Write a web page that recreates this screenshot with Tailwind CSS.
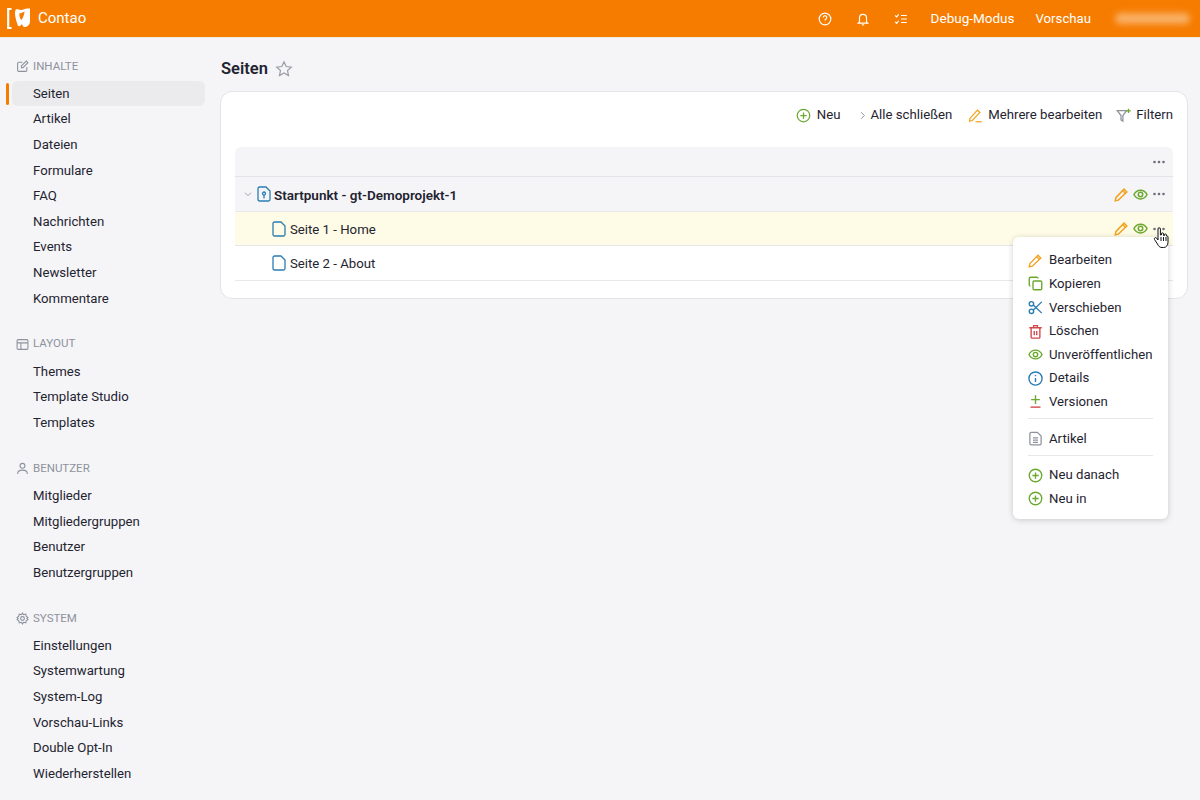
<!DOCTYPE html>
<html lang="de">
  <head>
    <meta charset="UTF-8" />
    <title>Seiten - Contao</title>
    <script src="https://cdn.jsdelivr.net/npm/@tailwindcss/browser@4"></script>
  </head>
  <body class="relative h-[800px] w-[1200px] overflow-hidden bg-[#f5f5f8] font-['Roboto',sans-serif] text-[13.2px] text-[#1f2430]">
    <!-- header -->
    <header class="flex h-[38px] items-center border-b border-[#f0ece6] bg-[#f67c00] text-white">
      <div class="flex items-center pl-[7px]">
        <svg class="h-[24px] w-[25px]" viewBox="0 0 25 24" fill="none">
          <path d="M4.500 2 H1.200 V21 H4.500" stroke="#fff" stroke-width="2.200" />
          <path d="M9 2.500 C11 1.500 13 3 14.500 3 C16 3 18 1.500 20 1.500 L23 1.500 V14 C23 18 20 20 17.500 20 C16 20 15.500 18.500 15 17 C14 18.500 12.500 19.500 11 19 C9.500 15 8 10 8 6 C8 4.500 8.300 3 9 2.500 Z" fill="#fff" />
          <path d="M12.500 6 C12 9 13 12 14.500 13 C16 11 17.500 7 17.500 4.500 C16 5.500 14 6.500 12.500 6 Z" fill="#f67c00" />
        </svg>
        <span class="ml-[6px] text-[15px]">Contao</span>
      </div>
      <div class="ml-auto flex items-center">
        <svg class="h-[14px] w-[14px]" viewBox="0 0 24 24" fill="none" stroke="#fff" stroke-width="2"><circle cx="12" cy="12" r="10" /><path d="M9 9.500a3 3 0 1 1 4.500 2.600c-1 .6-1.500 1.200-1.500 2.400" /><path d="M12 17.500v.5" /></svg>
        <svg class="ml-[24px] h-[14px] w-[14px]" viewBox="0 0 24 24" fill="none" stroke="#fff" stroke-width="2"><path d="M6 17V10a6 6 0 0 1 12 0v7l2 2H4z" /><path d="M10 22h4" /></svg>
        <svg class="ml-[24px] h-[14px] w-[14px]" viewBox="0 0 24 24" fill="none" stroke="#fff" stroke-width="2"><path d="M2 6l2.500 2.500L8 4M2 17l2.500 2.500L8 15M12 6h10M12 12h10M12 18h10" /></svg>
        <span class="ml-[23px] text-[13.5px]">Debug-Modus</span>
        <span class="ml-[21px]">Vorschau</span>
        <div class="mr-[10px] ml-[24px] h-[11px] w-[75px] rounded-full bg-white/40 blur-[3px]"></div>
      </div>
    </header>

    <div class="flex">
      <!-- sidebar -->
      <nav class="w-[220px] shrink-0 pt-[15px]">
        <div class="mb-[20px]">
          <h3 class="flex h-[27.5px] items-center pb-[1px] pl-[16px] text-[11.5px] text-[#8d929c] uppercase">
            <svg class="mr-[4px] h-[13px] w-[13px]" viewBox="0 0 24 24" fill="none" stroke="#8d929c" stroke-width="2"><path d="M20 13v6a2 2 0 0 1-2 2H5a2 2 0 0 1-2-2V6a2 2 0 0 1 2-2h7" /><path d="M10 11l9-9 3 3-9 9H10z" /></svg>
            Inhalte
          </h3>
          <div class="relative">
            <span class="absolute top-[2px] left-[6px] h-[22px] w-[3px] rounded-full bg-[#f67c00]"></span>
            <a class="ml-[12px] flex h-[25.6px] w-[193px] items-center rounded-[6px] bg-[#ebebee] pt-[1px] pl-[21px]">Seiten</a>
          </div>
          <a class="flex h-[25.6px] items-center pt-[1px] pl-[33px]">Artikel</a>
          <a class="flex h-[25.6px] items-center pt-[1px] pl-[33px]">Dateien</a>
          <a class="flex h-[25.6px] items-center pt-[1px] pl-[33px]">Formulare</a>
          <a class="flex h-[25.6px] items-center pt-[1px] pl-[33px]">FAQ</a>
          <a class="flex h-[25.6px] items-center pt-[1px] pl-[33px]">Nachrichten</a>
          <a class="flex h-[25.6px] items-center pt-[1px] pl-[33px]">Events</a>
          <a class="flex h-[25.6px] items-center pt-[1px] pl-[33px]">Newsletter</a>
          <a class="flex h-[25.6px] items-center pt-[1px] pl-[33px]">Kommentare</a>
        </div>
        <div class="mb-[20px]">
          <h3 class="flex h-[27.5px] items-center pb-[1px] pl-[16px] text-[11.5px] text-[#8d929c] uppercase">
            <svg class="mr-[4px] h-[13px] w-[13px]" viewBox="0 0 24 24" fill="none" stroke="#8d929c" stroke-width="2"><rect x="2" y="3" width="20" height="18" rx="2" /><path d="M2 9h20M9 9v12" /></svg>
            Layout
          </h3>
          <a class="flex h-[25.6px] items-center pt-[1px] pl-[33px]">Themes</a>
          <a class="flex h-[25.6px] items-center pt-[1px] pl-[33px]">Template Studio</a>
          <a class="flex h-[25.6px] items-center pt-[1px] pl-[33px]">Templates</a>
        </div>
        <div class="mb-[20px]">
          <h3 class="flex h-[27.5px] items-center pb-[1px] pl-[16px] text-[11.5px] text-[#8d929c] uppercase">
            <svg class="mr-[4px] h-[13px] w-[13px]" viewBox="0 0 24 24" fill="none" stroke="#8d929c" stroke-width="2"><circle cx="12" cy="7" r="4.500" /><path d="M3 22c0-5 4-7 9-7s9 2 9 7" /></svg>
            Benutzer
          </h3>
          <a class="flex h-[25.6px] items-center pt-[1px] pl-[33px]">Mitglieder</a>
          <a class="flex h-[25.6px] items-center pt-[1px] pl-[33px]">Mitgliedergruppen</a>
          <a class="flex h-[25.6px] items-center pt-[1px] pl-[33px]">Benutzer</a>
          <a class="flex h-[25.6px] items-center pt-[1px] pl-[33px]">Benutzergruppen</a>
        </div>
        <div>
          <h3 class="flex h-[27.5px] items-center pb-[1px] pl-[16px] text-[11.5px] text-[#8d929c] uppercase">
            <svg class="mr-[4px] h-[13px] w-[13px]" viewBox="0 0 24 24" fill="none" stroke="#8d929c" stroke-width="2"><circle cx="12" cy="12" r="3.500" /><path d="M12 2l2 3 4-1 1 4 3 2-2 2 2 2-3 2-1 4-4-1-2 3-2-3-4 1-1-4-3-2 2-2-2-2 3-2 1-4 4 1z" /></svg>
            System
          </h3>
          <a class="flex h-[25.6px] items-center pt-[1px] pl-[33px]">Einstellungen</a>
          <a class="flex h-[25.6px] items-center pt-[1px] pl-[33px]">Systemwartung</a>
          <a class="flex h-[25.6px] items-center pt-[1px] pl-[33px]">System-Log</a>
          <a class="flex h-[25.6px] items-center pt-[1px] pl-[33px]">Vorschau-Links</a>
          <a class="flex h-[25.6px] items-center pt-[1px] pl-[33px]">Double Opt-In</a>
          <a class="flex h-[25.6px] items-center pt-[1px] pl-[33px]">Wiederherstellen</a>
        </div>
      </nav>

      <!-- main -->
      <main class="w-[968px] pt-[18px]">
        <div class="flex h-[26px] items-center pl-[1px]">
          <h1 class="text-[16.5px] font-semibold">Seiten</h1>
          <svg class="ml-[7px] h-[18px] w-[18px]" viewBox="0 0 24 24" fill="none" stroke="#9a9ea6" stroke-width="1.600"><path d="M12 2.500l2.900 6.200 6.800.8-5 4.600 1.300 6.700-6-3.400-6 3.400 1.300-6.700-5-4.600 6.800-.8z" /></svg>
        </div>
        <div class="mt-[9px] h-[208px] rounded-[12px] border border-[#e4e4e8] bg-white px-[14px]">
          <div class="flex h-[46px] items-center justify-end">
            <svg class="h-[15px] w-[15px]" viewBox="0 0 24 24" fill="none" stroke="#6aa82e" stroke-width="2"><circle cx="12" cy="12" r="10" /><path d="M12 7v10M7 12h10" /></svg>
            <span class="ml-[6px]">Neu</span>
            <svg class="ml-[18px] h-[9px] w-[9px]" viewBox="0 0 24 24" fill="none" stroke="#8d929c" stroke-width="2.500"><path d="M8 3l9 9-9 9" /></svg>
            <span class="ml-[3px]">Alle schließen</span>
            <svg class="ml-[16px] h-[15px] w-[15px]" viewBox="0 0 24 24" fill="none" stroke="#f2a31f" stroke-width="2"><path d="M3 17L15 3.500l4 3.500L7 20l-4.500 1z" /><path d="M12 22h10" /></svg>
            <span class="ml-[5px]">Mehrere bearbeiten</span>
            <svg class="ml-[14px] h-[15px] w-[15px]" viewBox="0 0 24 24" fill="none" stroke="#8d929c" stroke-width="2"><path d="M2 4h15l-6 8v9l-3-2v-7z" /><path d="M20 1v7M16.500 4.500h7" stroke="#6aa82e" /></svg>
            <span class="ml-[5px]">Filtern</span>
          </div>
          <div class="mt-[9px]">
            <div class="flex h-[30px] items-center justify-end rounded-t-[6px] border-b border-[#e4e4e8] bg-[#f5f5f8] pr-[7px]">
              <svg class="h-[14px] w-[14px]" viewBox="0 0 14 14" fill="#6b7078"><circle cx="2.500" cy="7" r="1.300" /><circle cx="7" cy="7" r="1.300" /><circle cx="11.500" cy="7" r="1.300" /></svg>
            </div>
            <div class="flex h-[35px] items-center border-b border-[#e8e8ec] bg-[#f5f5f8] pr-[7px]">
              <svg class="ml-[9px] h-[8px] w-[8px]" viewBox="0 0 24 24" fill="none" stroke="#8d929c" stroke-width="2.500"><path d="M3 8l9 9 9-9" /></svg>
              <svg class="ml-[5px] h-[16px] w-[15px]" viewBox="0 0 15 16" fill="none" stroke="#2b7cb3" stroke-width="1.300"><path d="M2.500 1h6.500l4 4v8.500a1.500 1.500 0 0 1-1.500 1.500h-9A1.500 1.500 0 0 1 1 13.500v-11A1.500 1.500 0 0 1 2.500 1z" /><circle cx="7" cy="7.500" r="1.500" /><path d="M7 9v3.500" /></svg>
              <span class="ml-[2px] pt-[2px] text-[13.5px] font-semibold">Startpunkt - gt-Demoprojekt-1</span>
              <div class="ml-auto flex items-center gap-[4px]">
                <svg class="h-[15px] w-[15px]" viewBox="0 0 24 24" fill="none" stroke="#f2a31f" stroke-width="2.400"><path d="M3 17L16 3.500l4.500 4.500L7 21l-5 1z" /><path d="M14 6l4.500 4.500" /></svg>
                <svg class="h-[15px] w-[15px]" viewBox="0 0 24 24" fill="none" stroke="#6aa82e" stroke-width="2.400"><path d="M1.500 12C4 7 8 5 12 5s8 2 10.500 7C20 17 16 19 12 19s-8-2-10.500-7z" /><circle cx="12" cy="12" r="3.500" /></svg>
                <svg class="h-[14px] w-[14px]" viewBox="0 0 14 14" fill="#6b7078"><circle cx="2.500" cy="7" r="1.300" /><circle cx="7" cy="7" r="1.300" /><circle cx="11.500" cy="7" r="1.300" /></svg>
              </div>
            </div>
            <div class="flex h-[34px] items-center border-b border-[#e8e8ec] bg-[#fefbe6] pr-[7px]">
              <svg class="ml-[37px] h-[16px] w-[15px]" viewBox="0 0 15 16" fill="none" stroke="#2b7cb3" stroke-width="1.300"><path d="M2.500 1h6.500l4 4v8.500a1.500 1.500 0 0 1-1.500 1.500h-9A1.500 1.500 0 0 1 1 13.500v-11A1.500 1.500 0 0 1 2.500 1z" /></svg>
              <span class="ml-[3px] pt-[2px]">Seite 1 - Home</span>
              <div class="ml-auto flex items-center gap-[4px]">
                <svg class="h-[15px] w-[15px]" viewBox="0 0 24 24" fill="none" stroke="#f2a31f" stroke-width="2.400"><path d="M3 17L16 3.500l4.500 4.500L7 21l-5 1z" /><path d="M14 6l4.500 4.500" /></svg>
                <svg class="h-[15px] w-[15px]" viewBox="0 0 24 24" fill="none" stroke="#6aa82e" stroke-width="2.400"><path d="M1.500 12C4 7 8 5 12 5s8 2 10.500 7C20 17 16 19 12 19s-8-2-10.500-7z" /><circle cx="12" cy="12" r="3.500" /></svg>
                <svg class="h-[14px] w-[14px]" viewBox="0 0 14 14" fill="#6b7078"><circle cx="2.500" cy="7" r="1.300" /><circle cx="7" cy="7" r="1.300" /><circle cx="11.500" cy="7" r="1.300" /></svg>
              </div>
            </div>
            <div class="flex h-[35px] items-center border-b border-[#e8e8ec] pr-[7px]">
              <svg class="ml-[37px] h-[16px] w-[15px]" viewBox="0 0 15 16" fill="none" stroke="#2b7cb3" stroke-width="1.300"><path d="M2.500 1h6.500l4 4v8.500a1.500 1.500 0 0 1-1.500 1.500h-9A1.500 1.500 0 0 1 1 13.500v-11A1.500 1.500 0 0 1 2.500 1z" /></svg>
              <span class="ml-[3px] pt-[2px]">Seite 2 - About</span>
            </div>
          </div>
        </div>
      </main>
    </div>

    <!-- context menu -->
    <div class="absolute top-[237px] left-[1013px] h-[282px] w-[155px] rounded-[6px] bg-white px-[15px] pt-[11px] shadow-[0_1px_6px_rgba(0,0,0,0.18)]">
      <a class="flex h-[23.6px] items-center gap-[6px] pt-[1px]"><svg class="h-[15px] w-[15px] shrink-0" viewBox="0 0 24 24" fill="none" stroke="#f2a31f" stroke-width="2.200"><path d="M3 17L16 3.500l4.500 4.500L7 21l-5 1z" /><path d="M14 6l4.500 4.500" /></svg>Bearbeiten</a>
      <a class="flex h-[23.6px] items-center gap-[6px] pt-[1px]"><svg class="h-[15px] w-[15px] shrink-0" viewBox="0 0 24 24" fill="none" stroke="#6aa82e" stroke-width="2.200"><rect x="8" y="8" width="14" height="14" rx="2" /><path d="M4 16a2 2 0 0 1-2-2V4a2 2 0 0 1 2-2h10a2 2 0 0 1 2 2" /></svg>Kopieren</a>
      <a class="flex h-[23.6px] items-center gap-[6px] pt-[1px]"><svg class="h-[15px] w-[15px] shrink-0" viewBox="0 0 24 24" fill="none" stroke="#2b7cb3" stroke-width="2.200"><circle cx="5.500" cy="6" r="3.500" /><circle cx="5.500" cy="18" r="3.500" /><path d="M8.500 8L22 21M8.500 16L22 3" /></svg>Verschieben</a>
      <a class="flex h-[23.6px] items-center gap-[6px] pt-[1px]"><svg class="h-[15px] w-[15px] shrink-0" viewBox="0 0 24 24" fill="none" stroke="#d0494b" stroke-width="2.200"><path d="M2 6h20M9 6V2.500h6V6M5 6v15a1.500 1.500 0 0 0 1.500 1.500h11A1.500 1.500 0 0 0 19 21V6M10 11v7M14 11v7" /></svg>Löschen</a>
      <a class="flex h-[23.6px] items-center gap-[6px] pt-[1px]"><svg class="h-[15px] w-[15px] shrink-0" viewBox="0 0 24 24" fill="none" stroke="#6aa82e" stroke-width="2.200"><path d="M1.500 12C4 7 8 5 12 5s8 2 10.500 7C20 17 16 19 12 19s-8-2-10.500-7z" /><circle cx="12" cy="12" r="3.500" /></svg>Unveröffentlichen</a>
      <a class="flex h-[23.6px] items-center gap-[6px] pt-[1px]"><svg class="h-[15px] w-[15px] shrink-0" viewBox="0 0 24 24" fill="none" stroke="#2b7cb3" stroke-width="2.200"><circle cx="12" cy="12" r="10.500" /><path d="M12 11v6.500M12 6.500v2" /></svg>Details</a>
      <a class="flex h-[23.6px] items-center gap-[6px] pt-[1px]"><svg class="h-[15px] w-[15px] shrink-0" viewBox="0 0 24 24" fill="none" stroke-width="2.200"><path d="M12 2v14M5 9h14" stroke="#6aa82e" /><path d="M4 21h16" stroke="#d0494b" /></svg>Versionen</a>
      <div class="mt-[5px] mb-[7px] h-px bg-[#e8e8ec]"></div>
      <a class="flex h-[23.6px] items-center gap-[6px] pt-[1px]"><svg class="h-[15px] w-[15px] shrink-0" viewBox="0 0 24 24" fill="none" stroke="#8d929c" stroke-width="2"><path d="M5 2h10l6 6v12a2 2 0 0 1-2 2H5a2 2 0 0 1-2-2V4a2 2 0 0 1 2-2zM8 11h8M8 14.500h8M8 18h8" /></svg>Artikel</a>
      <div class="mt-[5px] mb-[7px] h-px bg-[#e8e8ec]"></div>
      <a class="flex h-[23.6px] items-center gap-[6px] pt-[1px]"><svg class="h-[15px] w-[15px] shrink-0" viewBox="0 0 24 24" fill="none" stroke="#6aa82e" stroke-width="2.200"><circle cx="12" cy="12" r="10" /><path d="M12 7v10M7 12h10" /></svg>Neu danach</a>
      <a class="flex h-[23.6px] items-center gap-[6px] pt-[1px]"><svg class="h-[15px] w-[15px] shrink-0" viewBox="0 0 24 24" fill="none" stroke="#6aa82e" stroke-width="2.200"><circle cx="12" cy="12" r="10" /><path d="M12 7v10M7 12h10" /></svg>Neu in</a>
    </div>

    <!-- mouse pointer -->
    <svg class="absolute top-[227px] left-[1153px] h-[22px] w-[17px]" viewBox="0 0 17 22" fill="#fff" stroke="#111" stroke-width="1"><path d="M5 2a1.200 1.200 0 0 1 2.400 0v6h1V7a1.100 1.100 0 0 1 2.200 0v1.500h.8V8a1 1 0 0 1 2 0v1h.5a1 1 0 0 1 1.100 1v5c0 3-1.500 5.500-4.500 5.500H9c-2.500 0-3.500-1.500-4.500-3.500L1.500 12.500c-.7-1.500 1-2.500 2-1.500L5 13z" /><path d="M8 10v4M10.500 10v4M13 10v4" /></svg>
  </body>
</html>
